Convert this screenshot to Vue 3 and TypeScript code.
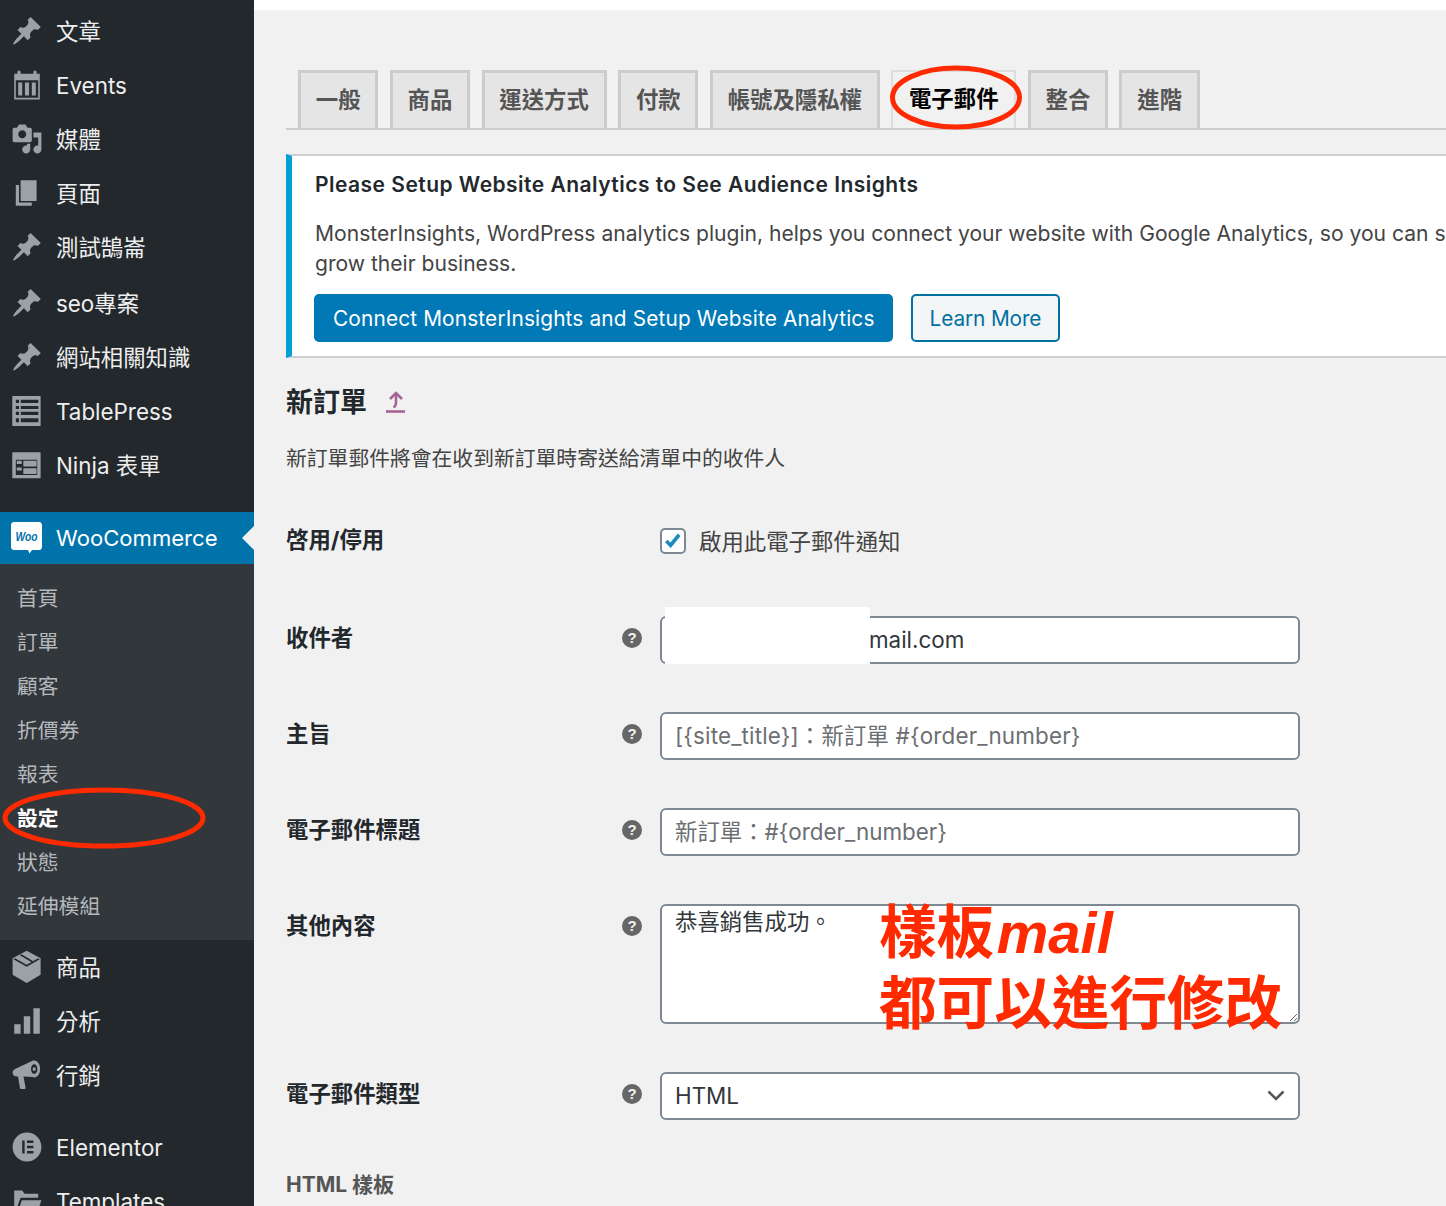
<script setup lang="ts">
interface MenuItem {
  label: string
  icon: string
  evenodd?: boolean
  cls?: string
}

const pin = 'M10.44 3.02l1.82-1.82 6.36 6.35-1.83 1.82c-1.05-.68-2.48-.57-3.41.36l-.75.75c-.92.93-1.04 2.35-.35 3.41l-1.83 1.82-2.41-2.41-2.8 2.79c-.42.42-3.38 2.71-3.8 2.29s1.86-3.39 2.28-3.81l2.79-2.79L4.1 9.36l1.83-1.82c1.05.69 2.48.57 3.4-.36l.75-.75c.93-.92 1.05-2.35.36-3.41z'

const topItems: MenuItem[] = [
  { label: '文章', icon: pin },
  { label: 'Events', evenodd: true, icon: 'M2 3h2V2.200C4 1.500 4.400 1 5 1s1 .5 1 1.200V3h8V2.200c0-.7.4-1.200 1-1.200s1 .5 1 1.200V3h2v16H2V3zm1 4v11h14V7H3zm1.500 1.500h2.500v8H4.500v-8zm4.200 0h2.600v8H8.700v-8zm4.300 0h2.500v8H13v-8z' },
  { label: '媒體', icon: 'M13 11V4c0-.55-.45-1-1-1h-1.670L9 1H5L3.670 3H2c-.55 0-1 .45-1 1v7c0 .55.45 1 1 1h10c.55 0 1-.45 1-1zM7 4.500c1.380 0 2.500 1.120 2.500 2.500S8.380 9.500 7 9.500 4.500 8.380 4.500 7 5.620 4.500 7 4.500zM14 6h5v10.500c0 1.380-1.120 2.500-2.500 2.500S14 17.880 14 16.500s1.120-2.500 2.500-2.500c.17 0 .34.02.5.05V9h-3V6zm-4 8.050V13h2v3.500c0 1.380-1.120 2.500-2.500 2.500S7 17.880 7 16.500 8.120 14 9.500 14c.17 0 .34.02.5.05z' },
  { label: '頁面', icon: 'M6 15V2h10v13H6zm-1 1h8v2H3V5h2v11z' },
  { label: '測試鵠崙', icon: pin },
  { label: 'seo專案', icon: pin, cls: 'shift' },
  { label: '網站相關知識', icon: pin },
  { label: 'TablePress', evenodd: true, icon: 'M1.200 .6h16.900c.2 0 .4.2.4.4v18c0 .2-.2.4-.4.4H1.200c-.2 0-.4-.2-.4-.4V1c0-.2.2-.4.4-.4zM3 3v2h2V3H3zm3.100 0v2h11V3h-11zM3 6.800v2h2v-2H3zm3.100 0v2h11v-2h-11zM3 10.500v2h2v-2H3zm3.100 0v2h11v-2h-11zM3 14.600V17h2v-2.400H3zm3.100 0V17h11v-2.400h-11z' },
  { label: 'Ninja 表單', evenodd: true, icon: 'M1.200 2.100h16.900c.2 0 .4.2.4.4v15.400c0 .2-.2.4-.4.4H1.200c-.2 0-.4-.2-.4-.4V2.500c0-.2.2-.4.4-.4zM3 6.700v9.600h13.400V6.700H3zm.6.6h3.100v2.100H3.600V7.300zm0 4.200h3.100v2H3.600v-2zm4.100-4.200H16V11H7.700V7.300zm0 4.700H16v3.600H7.700V12z' },
]

const subItems = ['首頁', '訂單', '顧客', '折價券', '報表', '設定', '狀態', '延伸模組']

const bottomItems: MenuItem[] = [
  { label: '商品', evenodd: true, icon: 'M9.800-.2l8.700 4.800v10.200L9.800 20 1 14.800V4.600L9.800-.2zM2.500 4.600l7.300 4 7.200-4 1 .6-8.200 4.600-8.200-4.600 .9-.6zM5.500 2.600l1-.6 7.200 4.200-1 .6-7.200-4.200z' },
  { label: '分析', icon: 'M18 18V2h-4v16h4zm-6 0V7H8v11h4zm-6 0v-6H2v6h4z' },
  { label: '行銷', evenodd: true, icon: 'M14.500 1c2.100 0 3.700 2.400 3.700 5.300s-1.600 5.300-3.700 5.300c-.4 0-.8-.1-1.200-.3L7.800 10.900l1.300 7c.1.500-.2.900-.7.900H6.400c-.4 0-.7-.3-.8-.6l-1.200-7.300-1.400-.1C1.800 10.800 1 9.700 1 8.500c0-1 .6-1.800 1.500-2.300l10.700-4.900c.4-.2.800-.3 1.300-.3zm0 2.300c-1.100 0-2 1.300-2 3s.9 3 2 3 2-1.300 2-3-.9-3-2-3zm0 1.800c.6 0 1 .6 1 1.200s-.4 1.200-1 1.200-1-.6-1-1.200.4-1.200 1-1.200z' },
  { label: 'Elementor', evenodd: true, icon: 'M10 1a9 9 0 1 1 0 18 9 9 0 0 1 0-18zM7 6v8h1.500V6H7zm3 0v1.500h4V6h-4zm0 3.200v1.600h4V9.200h-4zm0 3.300V14h4v-1.500h-4z', cls: 'elementor' },
  { label: 'Templates', icon: 'M2 3.500h5l1.500 2H17v2.500H6L3 16H2V3.500zM6.800 9.500H19L16.500 17H4.200l2.600-7.500z' },
]

const tabs = ['一般', '商品', '運送方式', '付款', '帳號及隱私權', '電子郵件', '整合', '進階']

// CJK glyphs sit a little low next to Latin ones
const isCjk = (s: string): boolean => /[\u4e00-\u9fff]/.test(s)
</script>

<template>
  <div class="page">
    <aside class="sidebar">
      <ul class="menu top-menu">
        <li v-for="item in topItems" :key="item.label" class="menu-item" :class="item.cls">
          <svg class="menu-icon" viewBox="0 0 20 20"><path :d="item.icon" :fill-rule="item.evenodd ? 'evenodd' : 'nonzero'" /></svg>
          <span :class="{ cjk: isCjk(item.label) }">{{ item.label }}</span>
        </li>
      </ul>

      <div class="woo-item">
        <svg class="woo-icon" viewBox="0 0 32 32">
          <path d="M3 0h25c1.700 0 3 1.300 3 3v22c0 1.700-1.300 3-3 3h-7l-2.500 3.500L17 28H3c-1.700 0-3-1.300-3-3V3c0-1.700 1.300-3 3-3z" fill="#fff" />
          <text x="15.500" y="18.500" text-anchor="middle" textLength="22" lengthAdjust="spacingAndGlyphs" class="woo-text">Woo</text>
        </svg>
        <span class="woo-label">WooCommerce</span>
        <i class="woo-arrow"></i>
      </div>

      <ul class="submenu">
        <li v-for="label in subItems" :key="label" :class="{ current: label === '設定' }">{{ label }}</li>
      </ul>

      <ul class="menu">
        <li v-for="item in bottomItems" :key="item.label" class="menu-item" :class="item.cls">
          <svg class="menu-icon" viewBox="0 0 20 20"><path :d="item.icon" :fill-rule="item.evenodd ? 'evenodd' : 'nonzero'" /></svg>
          <span :class="{ cjk: isCjk(item.label) }">{{ item.label }}</span>
        </li>
      </ul>
    </aside>

    <main class="content">
      <nav class="tabs">
        <a v-for="tab in tabs" :key="tab" class="tab" :class="{ active: tab === '電子郵件' }">{{ tab }}</a>
      </nav>

      <section class="notice">
        <h3>Please Setup Website Analytics to See Audience Insights</h3>
        <p>MonsterInsights, WordPress analytics plugin, helps you connect your website with Google Analytics, so you can see how people find and use your website, so you can<br />grow their business.</p>
        <div class="notice-actions">
          <a class="btn primary">Connect MonsterInsights and Setup Website Analytics</a>
          <a class="btn secondary">Learn More</a>
        </div>
      </section>

      <h2 class="title">
        新訂單
        <svg class="up-icon" viewBox="0 0 20 24">
          <path d="M4 9l6-6 6 6M10 3.500v9c0 2.500-1 4-2.500 5" />
          <path d="M0 21.500h19" />
        </svg>
      </h2>
      <p class="desc">新訂單郵件將會在收到新訂單時寄送給清單中的收件人</p>

      <div class="row enable-row">
        <label class="label">啓用/停用</label>
        <span></span>
        <div class="check-field">
          <span class="checkbox">
            <svg viewBox="0 0 22 22"><path d="M4.500 11.500l4.500 4.500L18 5" /></svg>
          </span>
          <span class="check-text">啟用此電子郵件通知</span>
        </div>
      </div>

      <div class="row">
        <label class="label">收件者</label>
        <span class="help">?</span>
        <div class="recipient">
          <input class="input recipient-input" type="text" value="mail.com" />
          <div class="redact"></div>
        </div>
      </div>

      <div class="row">
        <label class="label">主旨</label>
        <span class="help">?</span>
        <input class="input muted subject" type="text" value="[{site_title}]：新訂單 #{order_number}" />
      </div>

      <div class="row">
        <label class="label">電子郵件標題</label>
        <span class="help">?</span>
        <input class="input muted" type="text" value="新訂單：#{order_number}" />
      </div>

      <div class="row">
        <label class="label">其他內容</label>
        <span class="help">?</span>
        <div class="area-wrap">
          <textarea class="area">恭喜銷售成功。</textarea>
          <div class="callout">
            <div>樣板<em>mail</em></div>
            <div>都可以進行修改</div>
          </div>
        </div>
      </div>

      <div class="row">
        <label class="label">電子郵件類型</label>
        <span class="help">?</span>
        <div class="select">
          <span>HTML</span>
          <svg viewBox="0 0 20 20"><path d="M2.500 5.500L10 13l7.500-7.500" /></svg>
        </div>
      </div>

      <h4 class="sub-title">HTML 樣板</h4>
    </main>

    <svg class="marks" width="1446" height="1206">
      <ellipse cx="956" cy="97.500" rx="63.500" ry="29.500" />
      <ellipse cx="104" cy="818" rx="99" ry="28" />
    </svg>
  </div>
</template>

<style>
html,
body {
  margin: 0;
  overflow: hidden;
  background: #f1f1f1;
}
</style>

<style scoped>
* {
  box-sizing: border-box;
}

.page {
  position: relative;
  display: flex;
  width: 1446px;
  height: 1206px;
  overflow: hidden;
  font-family: Inter, "Noto Sans CJK TC", sans-serif;
  font-size: 22.400px;
  color: #444;
}

.sidebar {
  flex: 0 0 254px;
  background: #23282d;
  color: #eee;
}

ul {
  margin: 0;
  padding: 0;
  list-style: none;
}

.cjk {
  padding-bottom: 3px;
}

.top-menu {
  padding-top: 4px;
}

.menu-item {
  display: flex;
  align-items: center;
  height: 54px;
  padding-left: 11px;
  white-space: nowrap;
}

.menu-item.shift {
  margin-top: 2px;
}

.menu-item.elementor {
  margin-top: 18px;
}

.menu-icon {
  width: 32px;
  height: 32px;
  margin-right: 13px;
  fill: #9ca1a6;
  overflow: visible;
}

.woo-item {
  position: relative;
  display: flex;
  align-items: center;
  height: 52px;
  margin-top: 20px;
  padding-left: 11px;
  background: #0073aa;
  color: #fff;
}

.woo-label {
  font-size: 22.100px;
}

.woo-icon {
  width: 32px;
  height: 32px;
  margin-right: 13px;
}

.woo-text {
  font-family: "Liberation Sans", sans-serif;
  font-size: 13px;
  font-style: italic;
  font-weight: 700;
  fill: #0073aa;
}

.woo-arrow {
  position: absolute;
  right: 0;
  top: 14px;
  border-top: 12px solid transparent;
  border-bottom: 12px solid transparent;
  border-right: 12px solid #f1f1f1;
}

.submenu {
  height: 376px;
  padding: 13px 0 0;
  background: #32373c;
  color: #b4b9be;
  font-size: 20.800px;
}

.submenu li {
  height: 44px;
  padding-left: 17px;
  line-height: 44px;
}

.submenu li.current {
  color: #fff;
  font-weight: 700;
}

.content {
  flex: 1;
  min-width: 0;
  padding: 70px 0 0 32px;
  background: linear-gradient(#fff 10px, #f1f1f1 10px);
}

.tabs {
  display: flex;
  gap: 11.400px;
  height: 60px;
  padding-left: 12px;
  border-bottom: 2px solid #ccc;
}

.tab {
  height: 58px;
  padding: 0 14.800px;
  border: 3px solid #ccc;
  border-bottom: 0;
  background: #e5e5e5;
  color: #555;
  font-weight: 700;
  line-height: 54px;
  white-space: nowrap;
}

.tab.active {
  padding: 0 15.800px;
  border-width: 2px 2px 0;
  border-color: #ddd;
  background: #f1f1f1;
  color: #000;
}

.notice {
  height: 204px;
  margin-top: 24px;
  padding: 14px 0 0 23px;
  border-top: 2px solid #ccd0d4;
  border-bottom: 2px solid #ccd0d4;
  border-left: 6px solid #00a0d2;
  background: #fff;
  font-size: 21.080px;
  white-space: nowrap;
}

.notice h3 {
  margin: 0;
  color: #23282d;
  font-size: 21px;
  font-weight: 600;
  letter-spacing: .47px;
  line-height: 30px;
}

.notice p {
  margin: 19px 0 0;
  line-height: 30px;
}

.notice-actions {
  display: flex;
  gap: 18px;
  margin: 15px 0 0 -1px;
}

.btn {
  height: 48px;
  padding: 0 17px;
  border: 2px solid #0071a1;
  border-radius: 5px;
  font-size: 20.800px;
  line-height: 46px;
}

.btn.primary {
  padding-right: 16px;
  border-color: #0079b6;
  background: #0079b6;
  color: #fff;
  letter-spacing: .16px;
}

.btn.secondary {
  background: #f3f5f6;
  color: #0071a1;
  letter-spacing: -.12px;
}

.title {
  display: flex;
  align-items: center;
  height: 40px;
  margin: 22px 0 0;
  color: #23282d;
  font-size: 27px;
  font-weight: 700;
}

.up-icon {
  width: 20px;
  height: 24px;
  margin: 3px 0 0 19px;
  fill: none;
  stroke: #a46497;
  stroke-width: 2.600;
}

.desc {
  margin: 24px 0 0;
  font-size: 20.800px;
  line-height: 30px;
}

.row {
  display: grid;
  grid-template-columns: 336px 38px 640px;
  align-items: start;
  margin-top: 48px;
}

.enable-row {
  margin-top: 44px;
  margin-bottom: 50px;
  height: 48px;
}

.enable-row + .row {
  margin-top: 0;
}

.label {
  padding-top: 7px;
  color: #23282d;
  font-weight: 700;
  line-height: 30px;
}

.help {
  width: 20px;
  height: 20px;
  margin-top: 12px;
  border-radius: 50%;
  background: #666;
  color: #f1f1f1;
  font-family: "Liberation Sans", sans-serif;
  font-size: 15px;
  font-weight: 700;
  line-height: 20px;
  text-align: center;
}

.check-field {
  display: flex;
  align-items: flex-start;
  gap: 13px;
  padding-top: 10px;
}

.check-text {
  margin-top: -1px;
  line-height: 30px;
}

.checkbox {
  width: 26px;
  height: 26px;
  border: 2.500px solid #7e8993;
  border-radius: 5px;
  background: #fff;
}

.checkbox svg {
  display: block;
  width: 21px;
  height: 21px;
  fill: none;
  stroke: #1e8cbe;
  stroke-width: 3.800;
}

.input,
.area,
.select {
  width: 640px;
  border: 2px solid #7e8993;
  border-radius: 6px;
  background: #fff;
  color: #32373c;
  font: inherit;
  outline: 0;
}

.input {
  height: 48px;
  padding: 0 13px 2px;
}

.muted {
  padding-bottom: 4px;
  color: #6b6f73;
}

.subject {
  letter-spacing: .18px;
}

.recipient,
.area-wrap {
  position: relative;
  width: 640px;
}

.recipient-input {
  display: block;
  padding-left: 207px;
}

.redact {
  position: absolute;
  left: 5px;
  top: -9px;
  width: 205px;
  height: 57px;
  background: #fff;
}

.area {
  display: block;
  height: 120px;
  padding: 1px 13px 0;
  line-height: 30px;
}

.callout {
  position: absolute;
  left: 219px;
  top: -7px;
  color: #ff2a00;
  font-size: 57.600px;
  font-weight: 700;
  line-height: 70px;
  white-space: nowrap;
  pointer-events: none;
}

.callout em {
  margin-left: 2.500px;
  font-family: "Liberation Sans", sans-serif;
  font-size: 58px;
}

.select {
  display: flex;
  align-items: center;
  justify-content: space-between;
  height: 48px;
  padding: 0 12px 2px 13px;
}

.select svg {
  width: 20px;
  height: 20px;
  margin-top: 2px;
  fill: none;
  stroke: #50575e;
  stroke-width: 2.500;
}

.sub-title {
  margin: 50px 0 0;
  color: #555;
  font-size: 21px;
  font-weight: 700;
  line-height: 30px;
}

.marks {
  position: absolute;
  left: 0;
  top: 0;
  pointer-events: none;
}

.marks ellipse {
  fill: none;
  stroke: #ff2a00;
  stroke-width: 5;
}
</style>
